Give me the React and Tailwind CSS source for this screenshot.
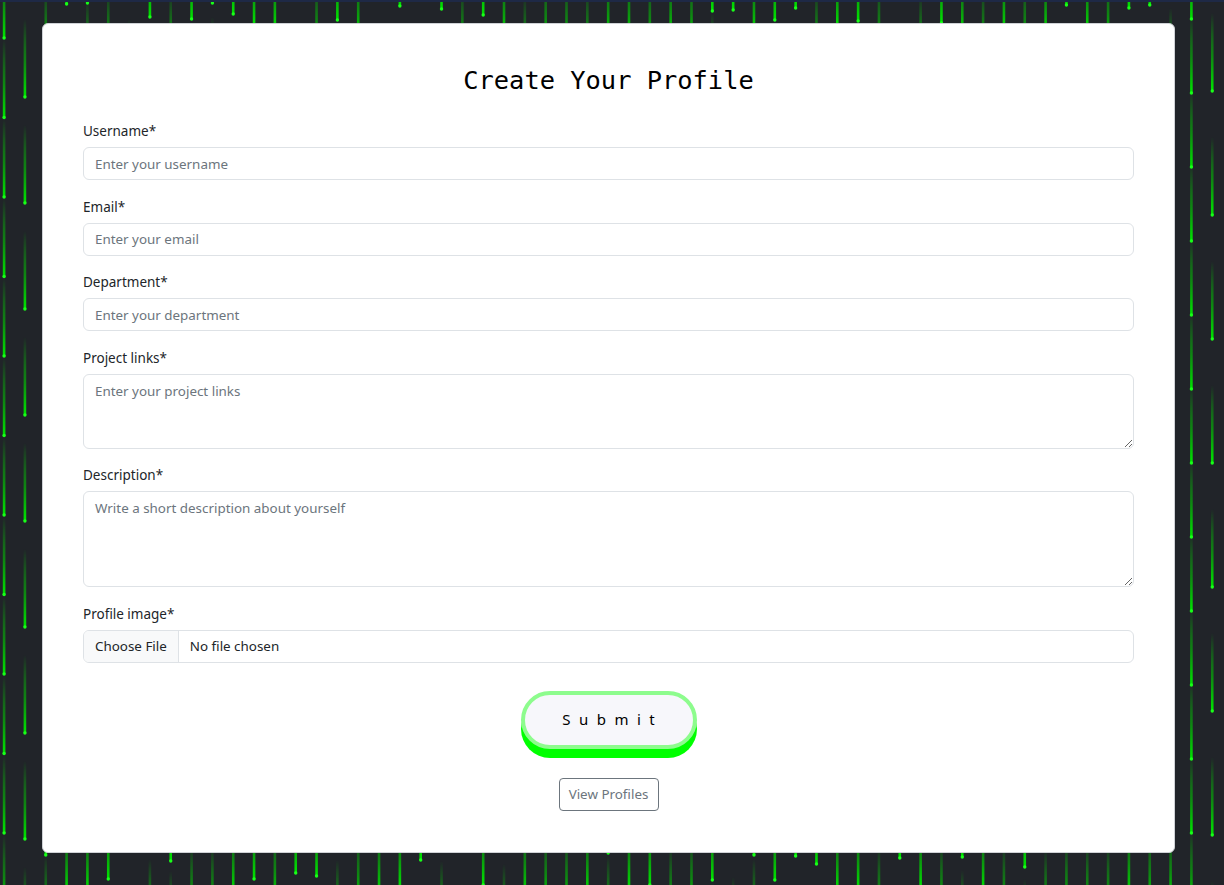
import React from "react";

function rand(seed) {
  let s = seed;
  return () => {
    s = (s * 16807) % 2147483647;
    return (s - 1) / 2147483646;
  };
}

function Rain() {
  const r = rand(12345);
  const cols = [];
  const known = {
    0: [79.5, 38],
    1: [106, 97],
    57: [74, 19],
    58: [124, 91],
  };
  for (let k = 0; k < 59; k++) {
    const x = 4 + 20.83 * k;
    let period, first;
    if (known[k]) {
      [period, first] = known[k];
    } else {
      period = 74 + Math.floor(r() * 56);
      first = Math.floor(r() * period);
    }
    const ys = [];
    for (let y = first; y < 885 + 80; y += period) ys.push(y);
    cols.push({ x, ys });
  }
  return (
    <svg
      className="fixed inset-0 z-0"
      width="1224"
      height="885"
      viewBox="0 0 1224 885"
    >
      <defs>
        <linearGradient id="rg" x1="0" y1="0" x2="0" y2="1">
          <stop offset="0" stopColor="#00ff00" stopOpacity="0" />
          <stop offset="0.55" stopColor="#00d400" stopOpacity="0.55" />
          <stop offset="1" stopColor="#00e600" stopOpacity="1" />
        </linearGradient>
      </defs>
      {cols.map((c, i) =>
        c.ys.map((y, j) => (
          <g key={i + "-" + j}>
            <rect x={c.x - 1.2} y={y - 78} width="2.6" height="78" fill="url(#rg)" />
            <circle cx={c.x + 0.1} cy={y} r="1.7" fill="#19ff19" />
          </g>
        ))
      )}
    </svg>
  );
}

function Label({ children }) {
  return (
    <label className="block text-[13.5px] leading-[20px] mb-[6px] text-[#212529]">
      {children}
    </label>
  );
}

const inputCls =
  "block w-full border border-[#dee2e6] rounded-[6px] px-[11px] text-[13.4px] text-[#212529] placeholder:text-[#6c757d] bg-white outline-none";

export default function App() {
  return (
    <div
      className="relative w-[1224px] h-[885px] overflow-hidden bg-[#212429]"
      style={{ fontFamily: '"Noto Sans", "Open Sans", sans-serif' }}
    >
      <Rain />
      <div className="absolute left-0 top-0 w-full h-[2px] bg-[#1e2946] z-10" />
      <div className="relative z-10 pt-[23px] pl-[42px]">
        <div className="w-[1133px] h-[830px] bg-white rounded-[6px] border border-[#cfd2d6] px-[40px] pt-[39px]">
          <h1
            className="text-center text-[25.4px] leading-[34px] text-black mb-[24px]"
            style={{ fontFamily: '"DejaVu Sans Mono", "Liberation Mono", monospace' }}
          >
            Create Your Profile
          </h1>
          <div className="mb-[16.5px]">
            <Label>Username*</Label>
            <input className={inputCls + " h-[33px]"} placeholder="Enter your username" />
          </div>
          <div className="mb-[16.5px]">
            <Label>Email*</Label>
            <input className={inputCls + " h-[33px]"} placeholder="Enter your email" />
          </div>
          <div className="mb-[16.5px]">
            <Label>Department*</Label>
            <input className={inputCls + " h-[33px]"} placeholder="Enter your department" />
          </div>
          <div className="mb-[16.5px]">
            <Label>Project links*</Label>
            <textarea
              className={inputCls + " h-[75px] py-[6px] leading-[21px] resize-y"}
              placeholder="Enter your project links"
            />
          </div>
          <div className="mb-[16.5px]">
            <Label>Description*</Label>
            <textarea
              className={inputCls + " h-[96px] py-[6px] leading-[21px] resize-y"}
              placeholder="Write a short description about yourself"
            />
          </div>
          <div>
            <Label>Profile image*</Label>
            <div className="flex h-[33px] w-full border border-[#dee2e6] rounded-[6px] overflow-hidden text-[13.4px] text-[#212529]">
              <div className="flex items-center px-[11px] bg-[#f8f9fa] border-r border-[#dee2e6]">
                Choose File
              </div>
              <div className="flex items-center px-[11px]">No file chosen</div>
            </div>
          </div>
          <div className="flex flex-col items-center mt-[28px]">
            <button className="w-[176px] h-[58px] rounded-full border-[4px] border-[#8dfc8d] bg-[#f7f7fb] shadow-[0_9px_0_0_#00ff00] text-[15px] tracking-[8.5px] pl-[8.5px] text-black">
              Submit
            </button>
            <button className="mt-[29px] w-[100px] h-[33px] rounded-[4px] border border-[#6c757d] text-[13.4px] text-[#6c757d] bg-white">
              View Profiles
            </button>
          </div>
        </div>
      </div>
    </div>
  );
}
